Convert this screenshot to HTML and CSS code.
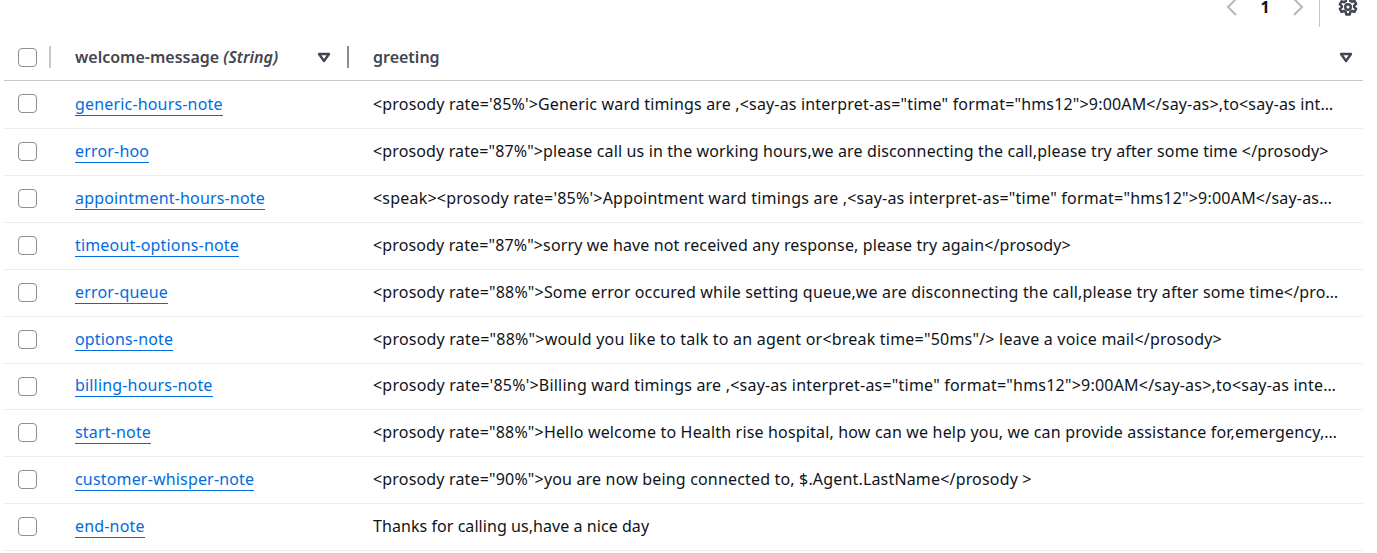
FILE: index.html
```html
<!DOCTYPE html>
<html lang="en">
<head>
    <meta charset="UTF-8">
    <title>Items</title>
    <link rel="stylesheet" href="styles.css">
</head>
<body>
    <div class="tools">
        <svg class="chev" width="14" height="18" viewBox="0 0 14 18"><path d="M11 1 3 9l8 8"/></svg>
        <span class="page-num">1</span>
        <svg class="chev" width="14" height="18" viewBox="0 0 14 18"><path d="m3 1 8 8-8 8"/></svg>
        <span class="tools-sep"></span>
        <svg class="gear" width="20" height="20" viewBox="0 0 16 16"><path d="M6.6 1h2.8l.4 2 1.3.8 2-.7 1.4 2.4-1.6 1.4v1.2l1.6 1.4-1.4 2.4-2-.7-1.3.8-.4 2H6.6l-.4-2-1.3-.8-2 .7-1.4-2.4 1.6-1.4V7.300L1.500 5.900l1.400-2.400 2 .7 1.300-.8z"/><circle cx="8" cy="8" r="2.200"/></svg>
    </div>

    <table class="items">
        <thead>
            <tr>
                <th class="col-check">
                    <div class="head-cell">
                        <span class="checkbox"></span>
                        <span class="sep light"></span>
                    </div>
                </th>
                <th class="col-key">
                    <div class="head-cell">
                        <span>welcome-message <em>(String)</em></span>
                        <svg class="sort" width="14" height="11" viewBox="0 0 14 11"><path d="M2 2h10L7 9z"/></svg>
                        <span class="sep"></span>
                    </div>
                </th>
                <th>
                    <div class="head-cell">
                        <span>greeting</span>
                        <svg class="sort" width="14" height="11" viewBox="0 0 14 11"><path d="M2 2h10L7 9z"/></svg>
                    </div>
                </th>
            </tr>
        </thead>
        <tbody>
            <tr class="first">
                <td><span class="checkbox"></span></td>
                <td><a href="#">generic-hours-note</a></td>
                <td class="val">&lt;prosody rate='85%'&gt;Generic ward timings are ,&lt;say-as interpret-as="time" format="hms12"&gt;9:00AM&lt;/say-as&gt;,to&lt;say-as interpret-as="time" format="hms12"&gt;5:00PM&lt;/say-as&gt;&lt;/prosody&gt;</td>
            </tr>
            <tr>
                <td><span class="checkbox"></span></td>
                <td><a href="#">error-hoo</a></td>
                <td class="val tight">&lt;prosody rate="87%"&gt;please call us in the working hours,we are disconnecting the call,please try after some time &lt;/prosody&gt;</td>
            </tr>
            <tr>
                <td><span class="checkbox"></span></td>
                <td><a href="#">appointment-hours-note</a></td>
                <td class="val wide">&lt;speak&gt;&lt;prosody rate='85%'&gt;Appointment ward timings are ,&lt;say-as interpret-as="time" format="hms12"&gt;9:00AM&lt;/say-as&gt;,to&lt;say-as interpret-as="time" format="hms12"&gt;5:00PM&lt;/say-as&gt;&lt;/prosody&gt;&lt;/speak&gt;</td>
            </tr>
            <tr>
                <td><span class="checkbox"></span></td>
                <td><a href="#">timeout-options-note</a></td>
                <td class="val tight">&lt;prosody rate="87%"&gt;sorry we have not received any response, please try again&lt;/prosody&gt;</td>
            </tr>
            <tr>
                <td><span class="checkbox"></span></td>
                <td><a href="#">error-queue</a></td>
                <td class="val">&lt;prosody rate="88%"&gt;Some error occured while setting queue,we are disconnecting the call,please try after some time&lt;/prosody&gt;</td>
            </tr>
            <tr>
                <td><span class="checkbox"></span></td>
                <td><a href="#">options-note</a></td>
                <td class="val wide">&lt;prosody rate="88%"&gt;would you like to talk to an agent or&lt;break time="50ms"/&gt; leave a voice mail&lt;/prosody&gt;</td>
            </tr>
            <tr class="short">
                <td><span class="checkbox"></span></td>
                <td><a href="#">billing-hours-note</a></td>
                <td class="val wide">&lt;prosody rate='85%'&gt;Billing ward timings are ,&lt;say-as interpret-as="time" format="hms12"&gt;9:00AM&lt;/say-as&gt;,to&lt;say-as interpret-as="time" format="hms12"&gt;5:00PM&lt;/say-as&gt;&lt;/prosody&gt;</td>
            </tr>
            <tr>
                <td><span class="checkbox"></span></td>
                <td><a href="#">start-note</a></td>
                <td class="val">&lt;prosody rate="88%"&gt;Hello welcome to Health rise hospital, how can we help you, we can provide assistance for,emergency,appointments and billing&lt;/prosody&gt;</td>
            </tr>
            <tr>
                <td><span class="checkbox"></span></td>
                <td><a href="#">customer-whisper-note</a></td>
                <td class="val">&lt;prosody rate="90%"&gt;you are now being connected to, $.Agent.LastName&lt;/prosody &gt;</td>
            </tr>
            <tr>
                <td><span class="checkbox"></span></td>
                <td><a href="#">end-note</a></td>
                <td class="val plain">Thanks for calling us,have a nice day</td>
            </tr>
        </tbody>
    </table>
</body>
</html>
```

FILE: styles.css
```css
body {
    margin: 0;
    background: #fff;
    font-family: "Noto Sans", "Open Sans", sans-serif;
    font-size: 16px;
    color: #0f141a;
    overflow: hidden;
}

.tools {
    display: flex;
    align-items: center;
    justify-content: flex-end;
    height: 26px;
    margin-top: -6px;
    padding-right: 19px;
}
.chev {
    fill: none;
    stroke: #b4b8bd;
    stroke-width: 2;
}
.page-num {
    width: 52px;
    text-align: center;
    font-weight: 700;
}
.tools-sep {
    flex: none;
    width: 1px;
    height: 40px;
    margin: 0 18px 0 14px;
    background: #c6c6cd;
}
.gear {
    fill: none;
    stroke: #424650;
    stroke-width: 2;
    stroke-linejoin: round;
}

.items {
    width: 1359px;
    margin: 15px 0 0 4px;
    border-collapse: collapse;
    table-layout: fixed;
}
.items th {
    box-sizing: border-box;
    height: 45px;
    padding: 0 10px 0 0;
    text-align: left;
    color: #424650;
    font-weight: 600;
    border-bottom: 1px solid #c6c6cd;
}
.items td {
    height: 46px;
    padding: 0;
    border-bottom: 1px solid #ebebf0;
    letter-spacing: 0.17px;
}
.items td + td {
    height: 44px;
    padding-bottom: 2px;
}
.items .first td {
    height: 46px;
    padding-bottom: 1px;
}
.items .short td {
    height: 45px;
}
.items .short td + td {
    height: 43px;
}
.col-check {
    width: 71px;
    white-space: nowrap;
}
.col-key {
    width: 298px;
}
.head-cell {
    display: flex;
    align-items: center;
}
.head-cell .sort {
    margin-left: auto;
}
.sort {
    fill: #fff;
    stroke: #424650;
    stroke-width: 2.4;
    stroke-linejoin: round;
}
.sep {
    display: block;
    width: 2px;
    height: 22px;
    margin-left: 16px;
    margin-right: 14px;
    background: #8c8c94;
}
.sep.light {
    background: #c6c6cd;
    margin-left: 12px;
    margin-right: 0;
}
.checkbox {
    display: block;
    box-sizing: border-box;
    width: 19px;
    height: 19px;
    margin-left: 14px;
    border: 1.500px solid #8c8c94;
    border-radius: 4px;
    background: #fff;
}
.items a {
    color: #006ce0;
    text-decoration: none;
    border-bottom: 1px solid #006ce0;
}
.items .val {
    padding-right: 24px;
    white-space: nowrap;
    overflow: hidden;
    text-overflow: ellipsis;
}
.items .tight {
    letter-spacing: 0.13px;
}
.items .wide {
    letter-spacing: 0.21px;
}
.items .plain {
    letter-spacing: 0.06px;
}
```
